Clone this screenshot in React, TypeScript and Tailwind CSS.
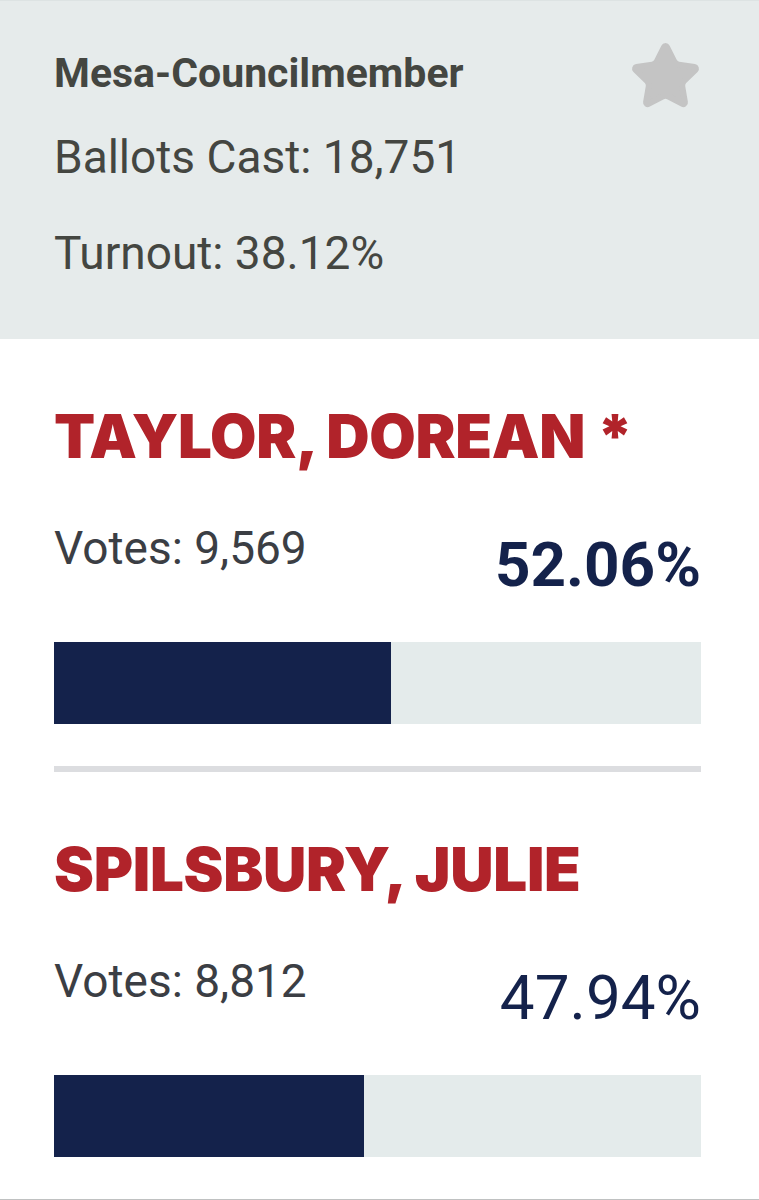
import React from "react"
import { Star } from "lucide-react"

interface Candidate {
  name: string
  incumbent: boolean
  votes: string
  pct: number
  leader: boolean
}

const candidates: Candidate[] = [
  { name: "TAYLOR, DOREAN", incumbent: true, votes: "9,569", pct: 52.06, leader: true },
  { name: "SPILSBURY, JULIE", incumbent: false, votes: "8,812", pct: 47.94, leader: false },
]

const roboto = { fontFamily: "Roboto, 'Liberation Sans', sans-serif" }

function CandidateRow({ c, last }: { c: Candidate; last: boolean }) {
  return (
    <div className="px-[54px] pr-[58px]">
      <div className={`pt-[60px] pb-[42px] ${last ? "" : "border-b-[6px] border-[#dcdde0]"}`}>
        <h3 className="font-['Inter',sans-serif] font-black text-[60px] leading-[75px] tracking-[-0.3px] text-[#b1232a] whitespace-nowrap">
          {c.name}
          {c.incumbent && " *"}
        </h3>

        <div className="mt-[47px] flex items-start justify-between" style={roboto}>
          <span className="text-[46px] leading-[54px] text-[#3b3e44]">Votes: {c.votes}</span>
          <span
            className={`mt-[8px] text-[62px] leading-[72px] text-[#14224b] ${c.leader ? "font-bold" : "font-normal"}`}
          >
            {c.pct.toFixed(2)}%
          </span>
        </div>

        <div className="mt-[41px] h-[82px] bg-[#e4ebeb]">
          <div className="h-full bg-[#14224b]" style={{ width: `${c.pct}%` }} />
        </div>
      </div>
    </div>
  )
}

export default function App() {
  return (
    <div className="w-[759px] bg-white border-t border-[#dde3e3] border-b border-b-[#bfc1c1]" style={roboto}>
      <div className="bg-[#e6ebeb] pl-[54px] pr-[57px] pb-[59px]">
        <div className="flex items-start justify-between pt-[48px]">
          <h2 className="text-[41px] leading-[48px] font-bold text-[#444641]">Mesa-Councilmember</h2>
          <Star className="-mt-[9px] -mb-[16px]" size={73} fill="#c4c4c4" stroke="#c4c4c4" strokeWidth={2} />
        </div>
        <p className="mt-[33px] text-[46px] leading-[54px] text-[#444641]">Ballots Cast: 18,751</p>
        <p className="mt-[42px] text-[46px] leading-[54px] text-[#444641]">Turnout: 38.12%</p>
      </div>

      {candidates.map((c, i) => (
        <CandidateRow key={c.name} c={c} last={i === candidates.length - 1} />
      ))}
    </div>
  )
}
